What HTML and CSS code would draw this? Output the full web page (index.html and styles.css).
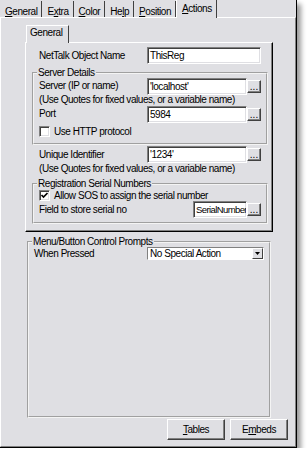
FILE: index.html
```html
<!DOCTYPE html>
<html lang="en">
<head>
    <meta charset="UTF-8">
    <title>NetTalk Actions</title>
    <link rel="stylesheet" href="styles.css">
</head>
<body>
    <div class="window">
        <div class="tabs">
            <span class="tab"><u>G</u>eneral</span>
            <span class="tab">E<u>x</u>tra</span>
            <span class="tab"><u>C</u>olor</span>
            <span class="tab">He<u>l</u>p</span>
            <span class="tab"><u>P</u>osition</span>
            <span class="tab active"><u>A</u>ctions</span>
        </div>
        <div class="page">
            <div class="subtabs"><span class="subtab">General</span></div>
            <div class="subpage">
                <div class="row first">
                    <span class="caption">NetTalk Object Name</span>
                    <span class="edit name">ThisReg</span>
                </div>
                <fieldset class="group server">
                    <legend>Server Details</legend>
                    <div class="row">
                        <span class="caption">Server (IP or name)</span>
                        <span class="edit">'localhost'</span>
                        <span class="dots">...</span>
                    </div>
                    <div class="note">(Use Quotes for fixed values, or a variable name)</div>
                    <div class="row">
                        <span class="caption">Port</span>
                        <span class="edit">5984</span>
                        <span class="dots">...</span>
                    </div>
                    <div class="check"><span class="box"></span>Use HTTP protocol</div>
                </fieldset>
                <div class="row first unique">
                    <span class="caption">Unique Identifier</span>
                    <span class="edit">'1234'</span>
                    <span class="dots">...</span>
                </div>
                <div class="note outside">(Use Quotes for fixed values, or a variable name)</div>
                <fieldset class="group serial">
                    <legend>Registration Serial Numbers</legend>
                    <div class="check">
                        <span class="box"><svg width="9" height="9" viewBox="0 0 9 9"><path d="M1.5 4 L3.5 6 L7.5 2" fill="none" stroke="#000" stroke-width="1.7"/></svg></span>Allow SOS to assign the serial number
                    </div>
                    <div class="row">
                        <span class="caption long">Field to store serial no</span>
                        <span class="edit short">SerialNumber</span>
                        <span class="dots">...</span>
                    </div>
                </fieldset>
            </div>
            <fieldset class="group prompts">
                <legend>Menu/Button Control Prompts</legend>
                <div class="row combo-row">
                    <span class="caption">When Pressed</span>
                    <span class="combo">
                        <span class="combo-text">No Special Action</span>
                        <span class="drop"><svg width="5" height="3" viewBox="0 0 5 3"><path d="M0 0 H5 L2.5 3 Z" fill="#000"/></svg></span>
                    </span>
                </div>
            </fieldset>
            <div class="buttons">
                <button class="btn"><u>T</u>ables</button>
                <button class="btn">E<u>m</u>beds</button>
            </div>
        </div>
    </div>
</body>
</html>
```

FILE: styles.css
```css
body {
    margin: 0;
    background-color: #fff;
    font-family: "Liberation Sans", Arial, sans-serif;
    font-size: 10px;
    letter-spacing: -0.45px;
    color: #000;
}

.window {
    width: 297px;
    height: 448px;
    box-sizing: border-box;
    display: flex;
    flex-direction: column;
    background-color: #dfdfe3;
    border-right: 1px solid #000;
    border-bottom: 1px solid #000;
    box-shadow: 4px 4px 5px rgba(0, 0, 0, 0.4);
}

/* outer tab strip */
.tabs {
    display: flex;
    align-items: flex-end;
    height: 17px;
}

.tab {
    height: 16px;
    box-sizing: border-box;
    padding: 5px 4px 0 5px;
    line-height: 12px;
    border-right: 1px solid #404040;
    white-space: nowrap;
}

.tab.active {
    position: relative;
    height: 18px;
    margin-bottom: -1px;
    padding-top: 3px;
    border-left: 1px solid #fff;
    background-color: #dfdfe3;
}

.page {
    flex: 1;
    display: flex;
    flex-direction: column;
    border-top: 1px solid #fff;
    border-left: 1px solid #fff;
    border-right: 1px solid #808080;
    border-bottom: 1px solid #808080;
}

/* inner tab control */
.subtabs {
    display: flex;
    margin: 7px 0 0 25px;
}

.subtab {
    position: relative;
    width: 43px;
    height: 18px;
    box-sizing: border-box;
    margin-bottom: -1px;
    padding: 1px 0 0 3px;
    line-height: 12px;
    border-top: 1px solid #fff;
    border-left: 1px solid #fff;
    border-right: 1px solid #404040;
    background-color: #dfdfe3;
}

.subpage {
    width: 248px;
    height: 190px;
    box-sizing: border-box;
    margin-left: 24px;
    padding: 4px 4px 0 6px;
    border: 1px solid;
    border-color: #fff #000 #000 #fff;
    box-shadow: inset -1px -1px #808080;
}

.row {
    display: flex;
    align-items: center;
    height: 17px;
}

.row.first {
    padding-left: 7px;
}

.row.unique {
    margin-top: 1px;
}

.caption {
    flex: none;
    width: 108px;
    line-height: 12px;
    white-space: nowrap;
}

.caption.long {
    width: 154px;
}

.note {
    line-height: 12px;
    white-space: nowrap;
}

.note.outside {
    padding-left: 7px;
}

.edit {
    flex: none;
    width: 100px;
    height: 17px;
    box-sizing: border-box;
    padding-left: 2px;
    line-height: 15px;
    background-color: #fff;
    border: 1px solid;
    border-color: #808080 #fff #fff #808080;
    box-shadow: inset 1px 1px #404040, inset -1px -1px #dfdfe3;
    white-space: nowrap;
    overflow: hidden;
}

.edit.name {
    width: 114px;
}

.edit.short {
    width: 54px;
    font-size: 9.5px;
    letter-spacing: -0.6px;
}

.dots {
    flex: none;
    width: 14px;
    height: 13px;
    box-sizing: border-box;
    text-align: center;
    line-height: 12px;
    letter-spacing: 0;
    border: 1px solid;
    border-color: #fff #404040 #404040 #fff;
    box-shadow: inset -1px -1px #808080;
}

/* group boxes */
.group {
    min-width: 0;
    width: 236px;
    box-sizing: border-box;
    margin: 4px 0 0;
    padding: 0 4px 6px 5px;
    border: 2px groove #f4f4f4;
}

.group legend {
    margin-left: -2px;
    padding: 0 1px;
    line-height: 10px;
}

.server .row {
    height: 16px;
}

.serial {
    padding-bottom: 4px;
}

.check {
    display: flex;
    align-items: center;
    gap: 4px;
    height: 12px;
    white-space: nowrap;
}

.server .check {
    margin-top: 3px;
}

.box {
    flex: none;
    display: flex;
    align-items: center;
    justify-content: center;
    width: 11px;
    height: 11px;
    box-sizing: border-box;
    background-color: #fff;
    border: 1px solid;
    border-color: #808080 #fff #fff #808080;
    box-shadow: inset 1px 1px #404040, inset -1px -1px #dfdfe3;
}

.prompts {
    width: 244px;
    height: 181px;
    margin: 5px 0 0 26px;
}

.prompts .caption {
    width: 113px;
}

.combo-row {
    height: 13px;
}

.combo {
    flex: none;
    display: flex;
    width: 117px;
    height: 13px;
    box-sizing: border-box;
    background-color: #fff;
    border: 1px solid;
    border-color: #808080 #fff #fff #808080;
}

.combo-text {
    flex: 1;
    padding-left: 2px;
    line-height: 11px;
    white-space: nowrap;
}

.drop {
    display: flex;
    align-items: center;
    justify-content: center;
    width: 11px;
    box-sizing: border-box;
    background-color: #dfdfe3;
    border: 1px solid;
    border-color: #fff #404040 #404040 #fff;
}

.buttons {
    display: flex;
    justify-content: flex-end;
    gap: 5px;
    margin: 1px 7px 0 0;
}

.btn {
    width: 58px;
    height: 21px;
    padding: 0;
    font: inherit;
    letter-spacing: inherit;
    color: #000;
    background-color: #dfdfe3;
    border: 1px solid;
    border-color: #fff #404040 #404040 #fff;
    box-shadow: inset -1px -1px #808080;
}
```
